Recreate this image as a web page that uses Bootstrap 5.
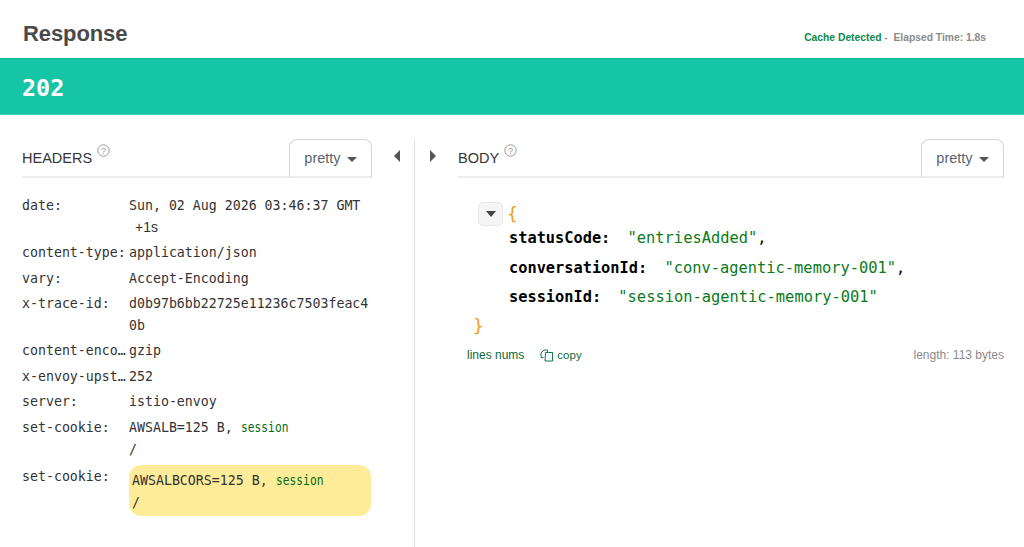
<!DOCTYPE html>
<html lang="en">
<head>
    <meta charset="UTF-8">
    <meta name="viewport" content="width=device-width, initial-scale=1.0">
    <title>Response</title>
    <link rel="stylesheet" href="https://cdn.jsdelivr.net/npm/bootstrap@5.3.0/dist/css/bootstrap.min.css">
    <style>
        html, body {
            height: 547px;
            overflow: hidden;
        }
        body {
            background-color: #fff;
            font-family: "Liberation Sans", Arial, sans-serif;
            color: #363636;
        }
        .top-head {
            height: 58px;
            padding: 0 38px 0 23px;
        }
        .top-title {
            font-size: 22px;
            font-weight: 700;
            color: #4a4a4a;
            margin: 0;
            line-height: 25px;
            padding-top: 21px;
            letter-spacing: -0.1px;
        }
        .top-meta {
            font-size: 10.3px;
            font-weight: 700;
            line-height: 12px;
            padding-top: 32px;
            color: #8a8a8a;
        }
        .cache-ok {
            color: #0a8a4a;
        }
        .status-bar {
            height: 57px;
            background-color: #16c4a6;
            border-top: 1px solid #10b597;
            border-bottom: 1px solid #3fd0b6;
            color: #fff;
            font-family: "DejaVu Sans Mono", monospace;
            font-size: 23.4px;
            font-weight: 700;
            line-height: 59px;
            padding-left: 22px;
        }
        .panes {
            height: 432px;
            padding-top: 24px;
        }
        .pane-left {
            width: 415px;
            padding-left: 22px;
            padding-right: 42px;
            border-right: 1px solid #e2e2e2;
            position: relative;
        }
        .pane-right {
            flex: 1;
            padding-left: 43px;
            padding-right: 20px;
            position: relative;
        }
        .pane-head {
            height: 39px;
            border-bottom: 2px solid #ededed;
        }
        .pane-label {
            font-size: 14.5px;
            line-height: 17px;
            padding-top: 5px;
            color: #363636;
        }
        .help-mark {
            vertical-align: 6px;
            margin-left: 1px;
        }
        .fmt-btn {
            width: 83px;
            height: 39px;
            margin-bottom: -2px;
            background: #fff;
            border: 1px solid #d6d6d6;
            border-bottom-color: #ededed;
            border-bottom-width: 2px;
            border-radius: 8px 8px 0 0;
            font-size: 14.5px;
            color: #5a6472;
            padding: 2px 0 0;
        }
        .fmt-btn.dropdown-toggle::after {
            margin-left: 6px;
            vertical-align: 1px;
            color: #555;
            border-top-width: 5px;
            border-left-width: 5.5px;
            border-right-width: 5.5px;
        }
        .arrow-btn {
            position: absolute;
            top: 11px;
            width: 0;
            height: 0;
            border-top: 6px solid transparent;
            border-bottom: 6px solid transparent;
        }
        .arrow-left {
            right: 14px;
            border-right: 6px solid #555;
        }
        .arrow-right {
            left: 15px;
            border-left: 6px solid #555;
        }
        .hdr-list {
            padding-top: 17px;
            font-family: "DejaVu Sans Mono", monospace;
            font-size: 13.25px;
            line-height: 21.5px;
            color: #333;
        }
        .hdr-row {
            display: flex;
            margin-bottom: 4px;
        }
        .hdr-key {
            width: 107px;
            flex: none;
            white-space: nowrap;
            padding-right: 2px;
        }
        .hdr-val {
            flex: 1;
            min-width: 0;
            word-break: break-all;
        }
        .hdr-cookie {
            line-height: 22.5px;
        }
        .hdr-hit {
            background-color: #ffec99;
            border-radius: 12px;
            margin-top: -1px;
            padding: 5px 3px 1px;
            margin-right: 1px;
        }
        .delta {
            font-family: "Liberation Sans", Arial, sans-serif;
            font-size: 14px;
            padding-left: 6px;
        }
        .cookie-kind {
            display: inline-block;
            color: #006b12;
            transform: scaleX(0.85);
            transform-origin: left center;
        }
        .json-view {
            padding: 24px 0 0 20px;
            font-family: "DejaVu Sans Mono", monospace;
            font-size: 15.3px;
            line-height: 29.5px;
            color: #000;
        }
        .json-open {
            height: 22px;
        }
        .json-toggle {
            width: 25px;
            height: 24px;
            background: #f5f5f5;
            border: 1px solid #e8e8e8;
            border-radius: 5px;
            margin-right: 4px;
        }
        .tri-down {
            width: 0;
            height: 0;
            border-left: 5.5px solid transparent;
            border-right: 5.5px solid transparent;
            border-top: 6px solid #444;
        }
        .brace {
            color: #f0a020;
            font-size: 18px;
            line-height: 24px;
        }
        .brace-close {
            margin-left: -5px;
            line-height: 25.5px;
        }
        .json-row {
            padding-left: 31px;
        }
        .json-key {
            font-weight: 700;
            margin-right: 8px;
        }
        .json-str {
            color: #0a7a1a;
            font-size: 15.4px;
        }
        .body-foot {
            font-size: 12px;
            line-height: 14px;
            padding-top: 10px;
            padding-left: 9px;
            color: #0a6a3a;
        }
        .copy-link {
            display: inline-flex;
            align-items: center;
            gap: 3px;
            font-size: 11.5px;
        }
        .body-len {
            color: #8a8a8a;
        }
    </style>
</head>
<body>

<div class="top-head d-flex justify-content-between">
    <h1 class="top-title">Response</h1>
    <div class="top-meta"><span class="cache-ok">Cache Detected</span> - &nbsp;Elapsed Time: 1.8s</div>
</div>
<div class="status-bar">202</div>

<div class="panes d-flex">
    <div class="pane-left">
        <div class="pane-head d-flex justify-content-between">
            <div class="pane-label">HEADERS
                <svg class="help-mark" width="13" height="13" viewBox="0 0 13 13"><circle cx="6.5" cy="6.5" r="5.7" fill="none" stroke="#999" stroke-width="1"/><text x="6.5" y="9.6" font-size="9" text-anchor="middle" fill="#999" font-family="Liberation Sans">?</text></svg>
            </div>
            <button type="button" class="btn fmt-btn dropdown-toggle">pretty</button>
        </div>
        <span class="arrow-btn arrow-left"></span>
        <div class="hdr-list">
            <div class="hdr-row"><div class="hdr-key">date:</div><div class="hdr-val">Sun, 02 Aug 2026 03:46:37 GMT<br><span class="delta">+1s</span></div></div>
            <div class="hdr-row"><div class="hdr-key">content-type:</div><div class="hdr-val">application/json</div></div>
            <div class="hdr-row"><div class="hdr-key">vary:</div><div class="hdr-val">Accept-Encoding</div></div>
            <div class="hdr-row"><div class="hdr-key">x-trace-id:</div><div class="hdr-val">d0b97b6bb22725e11236c7503feac40b</div></div>
            <div class="hdr-row"><div class="hdr-key">content-enco…</div><div class="hdr-val">gzip</div></div>
            <div class="hdr-row"><div class="hdr-key">x-envoy-upst…</div><div class="hdr-val">252</div></div>
            <div class="hdr-row"><div class="hdr-key">server:</div><div class="hdr-val">istio-envoy</div></div>
            <div class="hdr-row"><div class="hdr-key">set-cookie:</div><div class="hdr-val hdr-cookie">AWSALB=125 B, <span class="cookie-kind">session</span><br>/</div></div>
            <div class="hdr-row"><div class="hdr-key">set-cookie:</div><div class="hdr-val hdr-cookie hdr-hit">AWSALBCORS=125 B, <span class="cookie-kind">session</span><br>/</div></div>
        </div>
    </div>
    <div class="pane-right">
        <span class="arrow-btn arrow-right"></span>
        <div class="pane-head d-flex justify-content-between">
            <div class="pane-label">BODY
                <svg class="help-mark" width="13" height="13" viewBox="0 0 13 13"><circle cx="6.5" cy="6.5" r="5.7" fill="none" stroke="#999" stroke-width="1"/><text x="6.5" y="9.6" font-size="9" text-anchor="middle" fill="#999" font-family="Liberation Sans">?</text></svg>
            </div>
            <button type="button" class="btn fmt-btn dropdown-toggle">pretty</button>
        </div>
        <div class="json-view">
            <div class="json-open d-flex align-items-start"><span class="json-toggle d-inline-flex align-items-center justify-content-center"><span class="tri-down"></span></span><span class="brace">{</span></div>
            <div class="json-row"><span class="json-key">statusCode:</span> <span class="json-str">"entriesAdded"</span>,</div>
            <div class="json-row"><span class="json-key">conversationId:</span> <span class="json-str">"conv-agentic-memory-001"</span>,</div>
            <div class="json-row"><span class="json-key">sessionId:</span> <span class="json-str">"session-agentic-memory-001"</span></div>
            <div class="brace brace-close">}</div>
        </div>
        <div class="body-foot d-flex justify-content-between">
            <div class="d-flex gap-3">
                <span>lines nums</span>
                <span class="copy-link"><svg width="14" height="13" viewBox="0 0 14 13" fill="none" stroke="#0a7a4a" stroke-width="1"><path d="M3.5 8.5h-2.5v-4.5l3-3h3.5v2"/><path d="M5.5 3.5h3l4 0v8.5h-7.5z"/></svg>copy</span>
            </div>
            <span class="body-len">length: 113 bytes</span>
        </div>
    </div>
</div>

<script src="https://cdn.jsdelivr.net/npm/bootstrap@5.3.0/dist/js/bootstrap.bundle.min.js"></script>
</body>
</html>
